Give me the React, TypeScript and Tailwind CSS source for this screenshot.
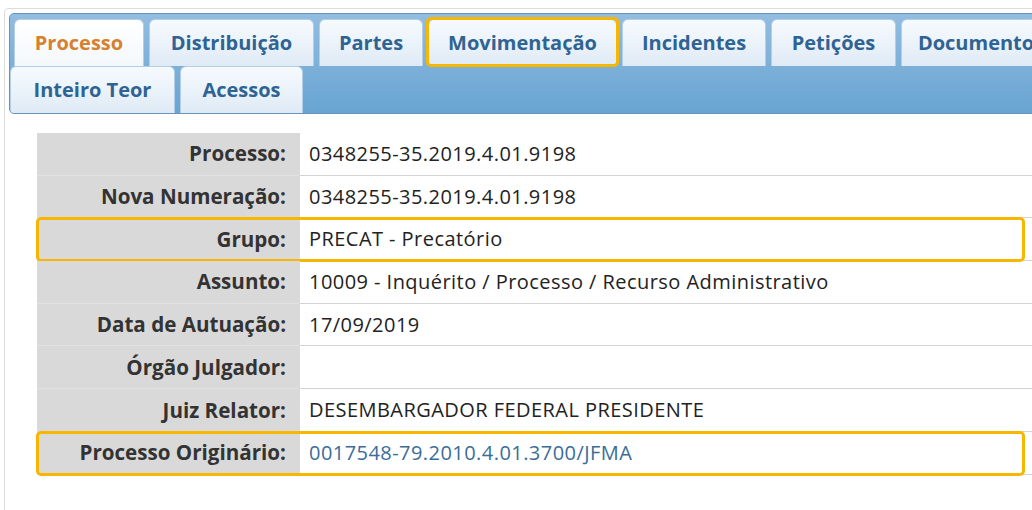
import React from "react";

type Tab = { label: string; w: number; active?: boolean; marked?: boolean };

const row1: Tab[] = [
  { label: "Processo", w: 130, active: true },
  { label: "Distribuição", w: 165 },
  { label: "Partes", w: 104 },
  { label: "Movimentação", w: 189, marked: true },
  { label: "Incidentes", w: 144 },
  { label: "Petições", w: 125 },
  { label: "Documentos", w: 160 },
];

const row2: Tab[] = [
  { label: "Inteiro Teor", w: 165 },
  { label: "Acessos", w: 123 },
];

type Field = { label: string; value: string; marked?: boolean; link?: boolean };

const fields: Field[] = [
  { label: "Processo:", value: "0348255-35.2019.4.01.9198" },
  { label: "Nova Numeração:", value: "0348255-35.2019.4.01.9198" },
  { label: "Grupo:", value: "PRECAT - Precatório", marked: true },
  { label: "Assunto:", value: "10009 - Inquérito / Processo / Recurso Administrativo" },
  { label: "Data de Autuação:", value: "17/09/2019" },
  { label: "Órgão Julgador:", value: "" },
  { label: "Juiz Relator:", value: "DESEMBARGADOR FEDERAL PRESIDENTE" },
  { label: "Processo Originário:", value: "0017548-79.2010.4.01.3700/JFMA", marked: true, link: true },
];

function TabItem({ tab }: { tab: Tab }) {
  return (
    <div className="relative shrink-0" style={{ width: tab.w }}>
      <div
        className={
          "h-[47px] flex items-center justify-center rounded-t-[6px] border border-b-0 border-[#b3cfe7] text-[20px] font-bold pb-[1px] " +
          (tab.active
            ? "bg-gradient-to-b from-[#ffffff] to-[#f3f8fc] text-[#d5812e]"
            : "bg-gradient-to-b from-[#f6fafd] via-[#ebf3fa] to-[#dfeaf5] text-[#2f6393]")
        }
      >
        {tab.label}
      </div>
      {tab.marked && (
        <div className="absolute -left-[2px] -right-[2px] -top-[2px] -bottom-[1px] border-[3px] border-[#f7b600] rounded-[5px]" />
      )}
    </div>
  );
}

export default function App() {
  return (
    <div className="w-[1032px] h-[510px] overflow-hidden bg-white font-['Open_Sans',sans-serif]">
      <div className="ml-[4px] mt-[8px] w-[1100px] h-[520px] border border-[#dcdcdc] rounded-[4px] p-[4px]">
        <div className="h-[101px] rounded-[5px] border border-[#6593bd] bg-gradient-to-b from-[#93bde0] to-[#68a4d2] overflow-hidden">
          <div className="flex gap-[5px] pl-[4px] pt-[5px]">
            {row1.map((t) => (
              <TabItem key={t.label} tab={t} />
            ))}
          </div>
          <div className="flex gap-[5px] pl-0">
            {row2.map((t) => (
              <TabItem key={t.label} tab={t} />
            ))}
          </div>
        </div>

        <div className="mt-[19px] ml-[28px] w-[1000px]">
          {fields.map((f) => (
            <div key={f.label} className="relative flex h-[42.7px]">
              <div className="w-[263px] shrink-0 bg-[#d9d9d9] border-b border-[#e2e2e2] flex items-center justify-end pr-[14px] text-[20.6px] font-bold text-[#333333]">
                {f.label}
              </div>
              <div
                className={
                  "flex-1 border-b border-[#d3d3d3] flex items-center pl-[9px] text-[20px] tracking-[0.45px] " +
                  (f.link ? "text-[#3a6d99]" : "text-[#222222]")
                }
              >
                {f.value}
              </div>
              {f.marked && (
                <div className="absolute -left-[1px] w-[989px] -top-[1px] -bottom-[1px] border-[3px] border-[#f7b600] rounded-[5px]" />
              )}
            </div>
          ))}
        </div>
      </div>
    </div>
  );
}
